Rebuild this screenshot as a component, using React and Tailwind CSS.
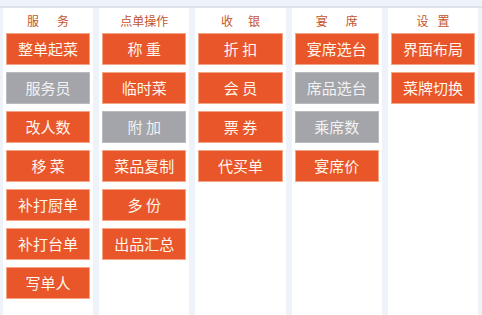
const columns = [
  {
    title: ["服", "务"],
    gap: "gap-[18px]",
    items: [
      { label: "整单起菜" },
      { label: "服务员", off: true },
      { label: "改人数" },
      { label: "移 菜" },
      { label: "补打厨单" },
      { label: "补打台单" },
      { label: "写单人" },
    ],
  },
  {
    title: ["点单操作"],
    items: [
      { label: "称 重" },
      { label: "临时菜" },
      { label: "附 加", off: true },
      { label: "菜品复制" },
      { label: "多 份" },
      { label: "出品汇总" },
    ],
  },
  {
    title: ["收", "银"],
    gap: "gap-[15px]",
    items: [
      { label: "折 扣" },
      { label: "会 员" },
      { label: "票 券" },
      { label: "代买单" },
    ],
  },
  {
    title: ["宴", "席"],
    gap: "gap-[18px]",
    items: [
      { label: "宴席选台" },
      { label: "席品选台", off: true },
      { label: "乘席数", off: true },
      { label: "宴席价" },
    ],
  },
  {
    title: ["设", "置"],
    gap: "gap-[9px]",
    items: [{ label: "界面布局" }, { label: "菜牌切换" }],
  },
]

const Button = ({ label, off }) => {
  return (
    <button
      type="button"
      className={
        off
          ? "h-[32px] w-full border border-[#b9bbc0] bg-[#a3a5aa] text-[15px] text-[#f2f2f2]"
          : "h-[32px] w-full border border-[#f2a587] bg-[#e85629] text-[15px] text-[#fff6ee]"
      }
    >
      {label}
    </button>
  )
}

export default function App() {
  return (
    <div
      className="h-[315px] w-[482px] overflow-hidden bg-[#eef3fa]"
      style={{ fontFamily: '"Noto Sans CJK SC", "Noto Sans", sans-serif' }}
    >
      <div className="h-[8px] border-b-2 border-[#dde2e9]" />
      <div className="flex h-[307px] gap-[6px] pl-[3px] pr-[4px]">
        {columns.map((col, i) => (
          <div key={i} className="flex flex-1 flex-col bg-white px-[3px]">
            <div className={`flex h-[25px] items-center justify-center text-[12px] text-[#c4532e] ${col.gap || ""}`}>
              {col.title.map((t) => (
                <span key={t}>{t}</span>
              ))}
            </div>
            <div className="flex flex-col gap-[7px]">
              {col.items.map((item) => (
                <Button key={item.label} label={item.label} off={item.off} />
              ))}
            </div>
          </div>
        ))}
      </div>
    </div>
  )
}
